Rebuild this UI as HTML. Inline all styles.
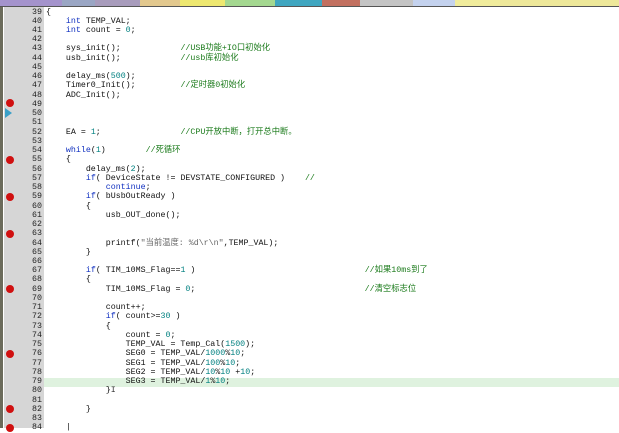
<!DOCTYPE html><html><head><meta charset="utf-8"><style>
body{margin:0;width:619px;height:428px;overflow:hidden;background:#fff;position:relative;font-family:"Liberation Mono","Noto Sans CJK SC",monospace;font-size:8.3px}
.tabs{position:absolute;left:0;top:0;height:6px;width:619px;display:flex;border-bottom:1px solid #555}
.tabs div{height:6px}
.gut{position:absolute;left:4px;top:7px;width:40px;height:421px;background:#d6d6d6}
.lb{position:absolute;left:0;top:7px;width:3px;height:421px;background:#6b6b5b}
.l{position:absolute;left:0;height:9.24px;line-height:9.24px;white-space:pre;width:619px}
.n{position:absolute;left:20px;width:22px;text-align:right;color:#222}
.c{position:absolute;left:46px;color:#111}
.k{color:#1030c0}.m{color:#008080}.g{color:#1a7a1a}.s{color:#666}
.bp{position:absolute;left:6px;width:8px;height:8px;border-radius:50%;background:#d01010}
.hl{position:absolute;left:44px;width:575px;height:9.24px;background:#dff2df}
</style></head><body>
<div class="tabs"><div style="width:62px;background:#a493cc"></div><div style="width:33px;background:#9aa6c4"></div><div style="width:45px;background:#a89cbc"></div><div style="width:40px;background:#e2c88e"></div><div style="width:45px;background:#eee870"></div><div style="width:50px;background:#a4d890"></div><div style="width:47px;background:#3fa6c0"></div><div style="width:38px;background:#c27060"></div><div style="width:53px;background:#c4c4c4"></div><div style="width:42px;background:#c4d2ee"></div><div style="width:45px;background:#f0ec9c"></div><div style="width:119px;background:#eee89a"></div></div>
<div class="gut"></div><div class="lb"></div>
<div class="hl" style="top:377.8px"></div>
<div class="bp" style="top:99px"></div>
<div style="position:absolute;left:5px;top:108px;width:0;height:0;border-top:5px solid transparent;border-bottom:5px solid transparent;border-left:7px solid #3aa0c8"></div>
<div class="bp" style="top:155.5px"></div>
<div class="bp" style="top:192.5px"></div>
<div class="bp" style="top:229.5px"></div>
<div class="bp" style="top:285px"></div>
<div class="bp" style="top:350px"></div>
<div class="bp" style="top:405px"></div>
<div class="bp" style="top:423.5px"></div>
<div id="code"></div>
<script>
const L={
39:'{',40:'    <span class="k">int</span> TEMP_VAL;',41:'    <span class="k">int</span> count = <span class="m">0</span>;',42:'',
43:'    sys_init();            <span class="g">//USB功能+IO口初始化</span>',
44:'    usb_init();            <span class="g">//usb库初始化</span>',45:'',
46:'    delay_ms(<span class="m">500</span>);',47:'    Timer0_Init();         <span class="g">//定时器0初始化</span>',48:'    ADC_Init();',49:'',50:'',51:'',
52:'    EA = <span class="m">1</span>;                <span class="g">//CPU开放中断，打开总中断。</span>',53:'',
54:'    <span class="k">while</span>(<span class="m">1</span>)        <span class="g">//死循环</span>',55:'    {',
56:'        delay_ms(<span class="m">2</span>);',57:'        <span class="k">if</span>( DeviceState != DEVSTATE_CONFIGURED )    <span class="g">//</span>',
58:'            <span class="k">continue</span>;',59:'        <span class="k">if</span>( bUsbOutReady )',60:'        {',61:'            usb_OUT_done();',62:'',63:'',
64:'            printf(<span class="s">"当前温度: %d\\r\\n"</span>,TEMP_VAL);',65:'        }',66:'',
67:'        <span class="k">if</span>( TIM_10MS_Flag==<span class="m">1</span> )                                  <span class="g">//如果10ms到了</span>',
68:'        {',69:'            TIM_10MS_Flag = <span class="m">0</span>;                                  <span class="g">//清空标志位</span>',70:'',
71:'            count++;',72:'            <span class="k">if</span>( count&gt;=<span class="m">30</span> )',73:'            {',74:'                count = <span class="m">0</span>;',
75:'                TEMP_VAL = Temp_Cal(<span class="m">1500</span>);',76:'                SEG0 = TEMP_VAL/<span class="m">1000</span>%<span class="m">10</span>;',
77:'                SEG1 = TEMP_VAL/<span class="m">100</span>%<span class="m">10</span>;',78:'                SEG2 = TEMP_VAL/<span class="m">10</span>%<span class="m">10</span> +<span class="m">10</span>;',
79:'                SEG3 = TEMP_VAL/<span class="m">1</span>%<span class="m">10</span>;',80:'            }<span style="color:#333">I</span>',81:'',82:'        }',83:'',84:'    |'};
let h='';for(let n=39;n<=84;n++){h+=`<div class="l" style="top:${7.5+(n-39)*9.24}px"><span class="n">${n}</span><span class="c">${L[n]}</span></div>`;}
document.getElementById('code').innerHTML=h;
</script>
</body></html>
